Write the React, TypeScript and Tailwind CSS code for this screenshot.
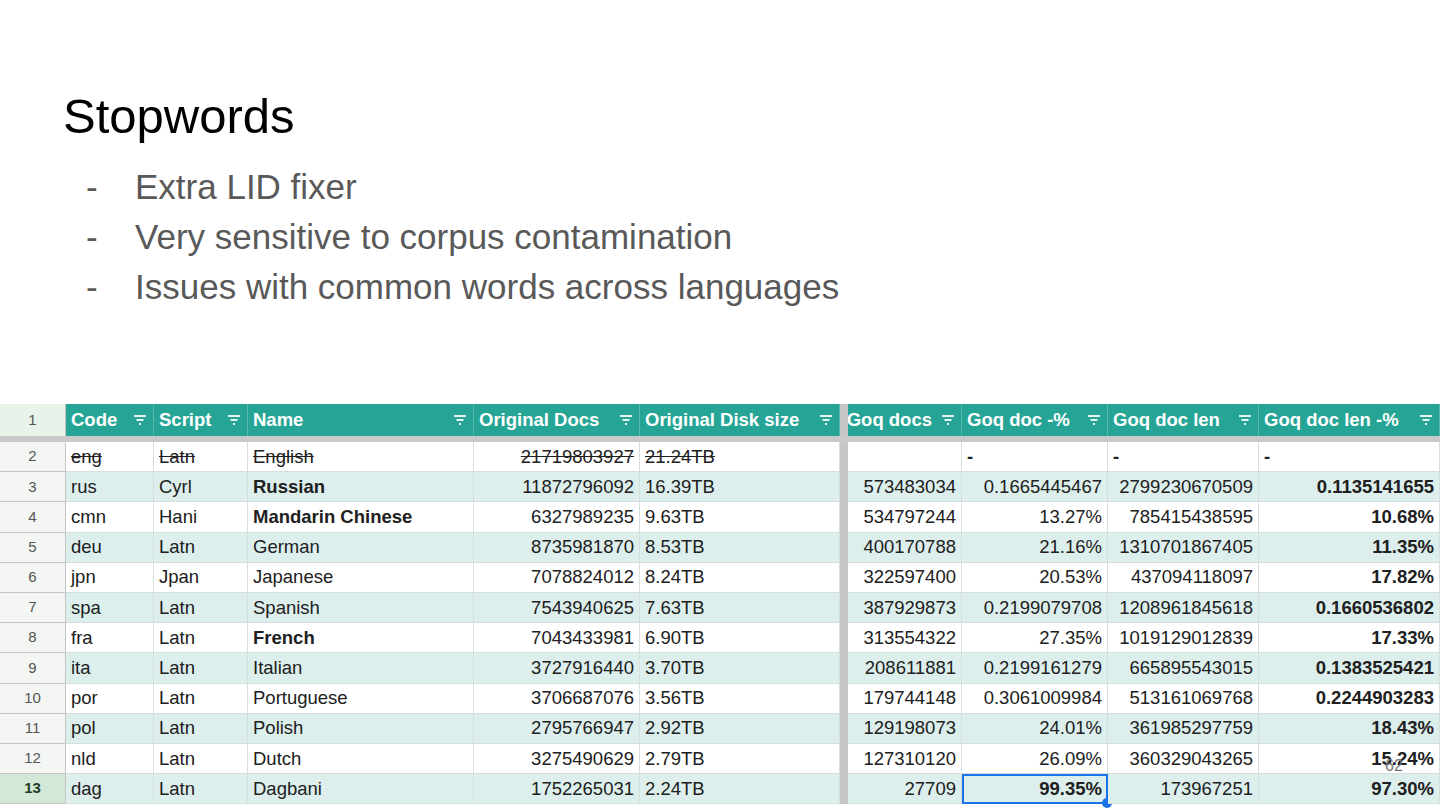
const cols = [66, 88, 94, 226, 166, 200, 8, 114, 146, 151, 181];
const tmpl = cols.map((c) => c + "px").join(" ");

type Cell = { t: string; b?: boolean; r?: boolean; s?: boolean };
const rows: Cell[][] = [
  [{ t: "eng", s: true }, { t: "Latn", s: true }, { t: "English", s: true }, { t: "21719803927", r: true, s: true }, { t: "21.24TB", s: true }, { t: "" }, { t: "-", b: true }, { t: "-", b: true }, { t: "-", b: true }],
  [{ t: "rus" }, { t: "Cyrl" }, { t: "Russian", b: true }, { t: "11872796092", r: true }, { t: "16.39TB" }, { t: "573483034", r: true }, { t: "0.1665445467", r: true }, { t: "2799230670509", r: true }, { t: "0.1135141655", r: true, b: true }],
  [{ t: "cmn" }, { t: "Hani" }, { t: "Mandarin Chinese", b: true }, { t: "6327989235", r: true }, { t: "9.63TB" }, { t: "534797244", r: true }, { t: "13.27%", r: true }, { t: "785415438595", r: true }, { t: "10.68%", r: true, b: true }],
  [{ t: "deu" }, { t: "Latn" }, { t: "German" }, { t: "8735981870", r: true }, { t: "8.53TB" }, { t: "400170788", r: true }, { t: "21.16%", r: true }, { t: "1310701867405", r: true }, { t: "11.35%", r: true, b: true }],
  [{ t: "jpn" }, { t: "Jpan" }, { t: "Japanese" }, { t: "7078824012", r: true }, { t: "8.24TB" }, { t: "322597400", r: true }, { t: "20.53%", r: true }, { t: "437094118097", r: true }, { t: "17.82%", r: true, b: true }],
  [{ t: "spa" }, { t: "Latn" }, { t: "Spanish" }, { t: "7543940625", r: true }, { t: "7.63TB" }, { t: "387929873", r: true }, { t: "0.2199079708", r: true }, { t: "1208961845618", r: true }, { t: "0.1660536802", r: true, b: true }],
  [{ t: "fra" }, { t: "Latn" }, { t: "French", b: true }, { t: "7043433981", r: true }, { t: "6.90TB" }, { t: "313554322", r: true }, { t: "27.35%", r: true }, { t: "1019129012839", r: true }, { t: "17.33%", r: true, b: true }],
  [{ t: "ita" }, { t: "Latn" }, { t: "Italian" }, { t: "3727916440", r: true }, { t: "3.70TB" }, { t: "208611881", r: true }, { t: "0.2199161279", r: true }, { t: "665895543015", r: true }, { t: "0.1383525421", r: true, b: true }],
  [{ t: "por" }, { t: "Latn" }, { t: "Portuguese" }, { t: "3706687076", r: true }, { t: "3.56TB" }, { t: "179744148", r: true }, { t: "0.3061009984", r: true }, { t: "513161069768", r: true }, { t: "0.2244903283", r: true, b: true }],
  [{ t: "pol" }, { t: "Latn" }, { t: "Polish" }, { t: "2795766947", r: true }, { t: "2.92TB" }, { t: "129198073", r: true }, { t: "24.01%", r: true }, { t: "361985297759", r: true }, { t: "18.43%", r: true, b: true }],
  [{ t: "nld" }, { t: "Latn" }, { t: "Dutch" }, { t: "3275490629", r: true }, { t: "2.79TB" }, { t: "127310120", r: true }, { t: "26.09%", r: true }, { t: "360329043265", r: true }, { t: "15.24%", r: true, b: true }],
  [{ t: "dag" }, { t: "Latn" }, { t: "Dagbani" }, { t: "1752265031", r: true }, { t: "2.24TB" }, { t: "27709", r: true }, { t: "99.35%", r: true, b: true }, { t: "173967251", r: true }, { t: "97.30%", r: true, b: true }],
];
const heads = ["Code", "Script", "Name", "Original Docs", "Original Disk size", "Goq docs", "Goq doc -%", "Goq doc len", "Goq doc len -%"];

function Filt() {
  return (
    <svg width="16" height="12" viewBox="0 0 16 12" className="shrink-0">
      <path d="M2 2h12M4.5 6h7M7 10h2" stroke="#e6f4f2" strokeWidth="1.8" />
    </svg>
  );
}

export default function App() {
  return (
    <div className="relative w-[1440px] h-[810px] bg-white overflow-hidden" style={{ fontFamily: '"Liberation Sans", Arial, sans-serif' }}>
      <div className="pl-[63px] pt-[86px] text-[49px] leading-[60px] text-black">Stopwords</div>
      <ul className="mt-[16px] pl-[86px] text-[35px] leading-[50px] text-[#595959]">
        {["Extra LID fixer", "Very sensitive to corpus contamination", "Issues with common words across languages"].map((b) => (
          <li key={b} className="flex">
            <span className="w-[49px]">-</span>
            <span>{b}</span>
          </li>
        ))}
      </ul>
      <div className="mt-[92px] grid text-[18.5px] text-[#202020]" style={{ gridTemplateColumns: tmpl }}>
        <div className="h-[32px] bg-[#e8f3ea] border-r border-[#c4c4c4] flex items-center justify-center text-[15px] text-[#555]">1</div>
        {heads.map((h, i) => (
          <>
            {i === 5 && <div key="fz" className="bg-[#c6c6c6]" />}
            <div key={h} className={`h-[32px] bg-[#26a596] text-white font-bold flex items-center pl-[5px] pr-[5px] border-r border-[#5ab9ac] overflow-hidden whitespace-nowrap ${i === 5 ? "justify-end gap-[8px]" : "justify-between"}`}>
              <span>{h}</span>
              <Filt />
            </div>
          </>
        ))}
        <div className="col-span-11 h-[6px] bg-[#c9c9c9]" />
        {rows.map((r, ri) => {
          const teal = ri % 2 === 1;
          const bg = teal ? "bg-[#ddefed]" : "bg-white";
          const last = ri === rows.length - 1;
          return (
            <>
              <div key={"n" + ri} className={`h-[30.2px] border-r border-b border-[#c4c4c4] flex items-center justify-center text-[15px] ${last ? "bg-[#d3e8d6] font-bold text-[#1e3e26]" : "bg-[#f3f6f3] text-[#555]"}`}>{ri + 2}</div>
              {r.map((c, ci) => (
                <>
                  {ci === 5 && <div key={"f" + ci} className="bg-[#c6c6c6]" />}
                  <div
                    key={ci}
                    className={`relative h-[30.2px] ${bg} border-r border-b border-[#d6dfde] flex items-center px-[5px] whitespace-nowrap overflow-hidden ${c.r ? "justify-end" : ""} ${c.b ? "font-bold" : ""} ${c.s ? "line-through" : ""} ${last && ci === 6 ? "outline-2 outline-[#1a73e8] -outline-offset-2 overflow-visible" : ""}`}
                  >
                    {c.t}
                    {last && ci === 6 && <span className="absolute right-[-5px] bottom-[-5px] w-[10px] h-[10px] rounded-full bg-[#1a73e8]" />}
                  </div>
                </>
              ))}
            </>
          );
        })}
      </div>
      <div className="absolute left-[1385px] top-[754px] text-[16px] text-[#777]">62</div>
    </div>
  );
}
